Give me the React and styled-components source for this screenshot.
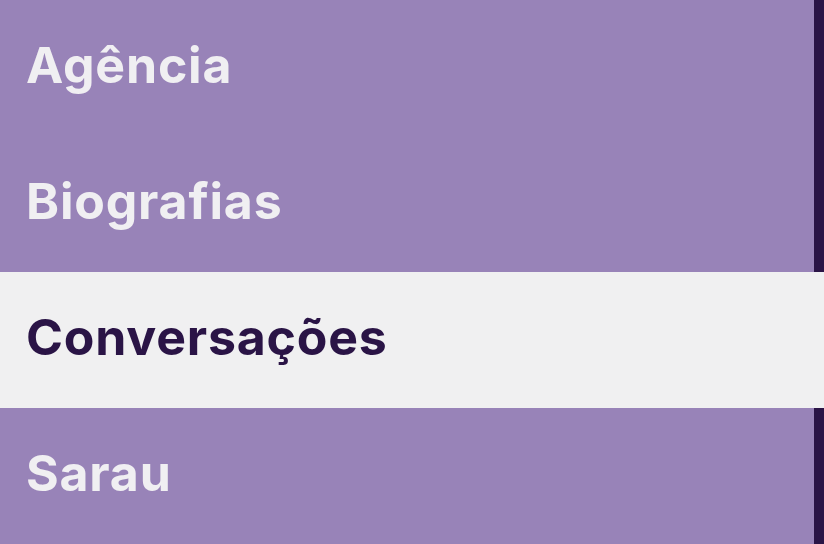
import React from "react";
import styled, { createGlobalStyle } from "styled-components";

const Global = createGlobalStyle`
  html, body { margin: 0; padding: 0; }
  body { background: #9883b8; font-family: Inter, "Noto Sans", sans-serif; }
`;

const Nav = styled.nav`
  display: flex;
  flex-direction: column;
  width: 824px;
  height: 544px;
  overflow: hidden;
  background: #9883b8;
`;

const Item = styled.a`
  display: flex;
  align-items: center;
  height: 136px;
  flex: 0 0 136px;
  box-sizing: border-box;
  padding: 0 0 6px 26px;
  text-decoration: none;
  font-family: Inter, "Noto Sans", sans-serif;
  font-weight: 700;
  font-size: 50px;
  letter-spacing: 0.8px;
  color: ${(p) => (p.$active ? "#2a1446" : "#f0eff2")};
  background: ${(p) => (p.$active ? "#f0f0f1" : "#9883b8")};
  border-right: 10px solid ${(p) => (p.$active ? "#f0f0f1" : "#2a1446")};
`;

const items = ["Agência", "Biografias", "Conversações", "Sarau"];

export default function App() {
  return (
    <>
      <Global />
      <Nav>
        {items.map((t) => (
          <Item key={t} href="#" $active={t === "Conversações"}>
            {t}
          </Item>
        ))}
      </Nav>
    </>
  );
}
